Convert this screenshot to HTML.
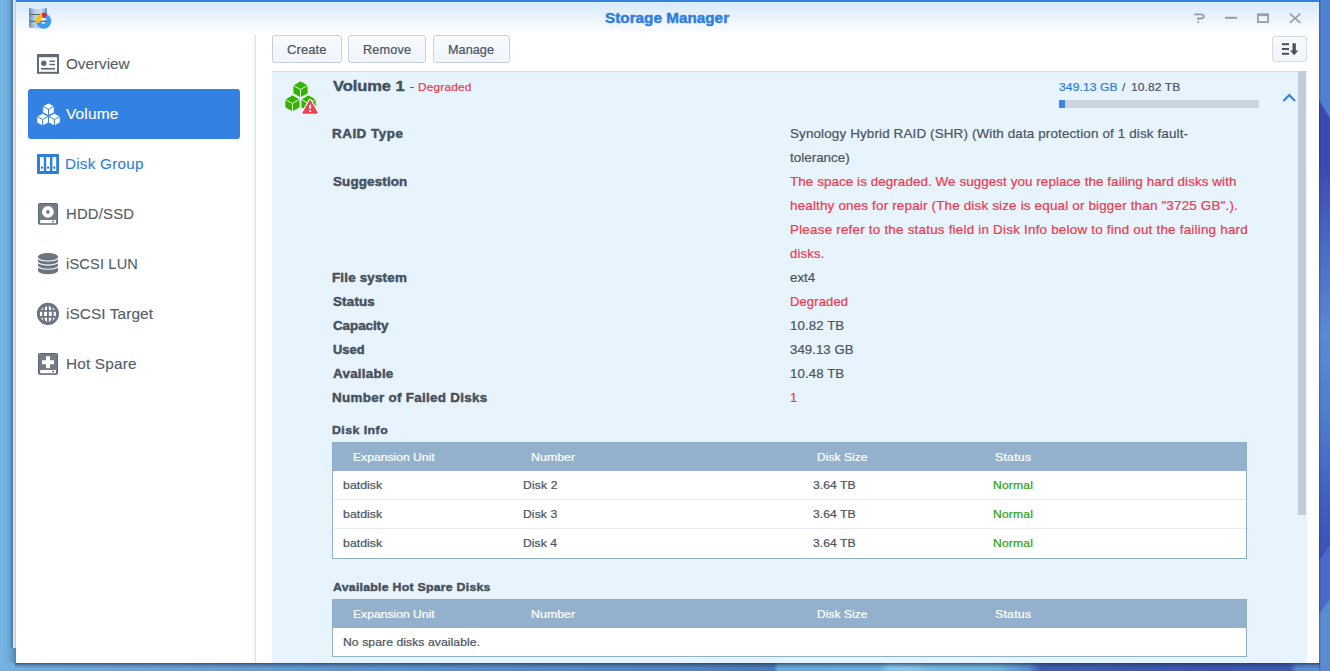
<!DOCTYPE html>
<html lang="en">
<head>
<meta charset="utf-8">
<title>Storage Manager</title>
<style>
html,body{margin:0;padding:0;}
body{width:1330px;height:671px;overflow:hidden;position:relative;font-family:"Liberation Sans",sans-serif;background:#5b95cb;}
.abs{position:absolute;}
#desk-left{left:0;top:0;width:16px;height:671px;background:linear-gradient(90deg,#77b5e3 0px,#75b2e0 6px,#6aa5d3 9px,#5a90be 11px,#4a7aa7 12.8px,#e8e6e6 13px,#e2e0e0 14.4px,#cecece 15px,#c9c9c9 16px);}
#desk-left2{left:0;top:648px;width:16px;height:23px;background:linear-gradient(90deg,#77b5e3 0px,#75b2e0 5px,#6ca8d6 9px,#5f97c6 13px,#4f82b0 16px);}
#desk-bottom{left:0;top:663px;width:1330px;height:8px;background:linear-gradient(90deg,#76b4e2 0px,#72aedd 16px,#72a9dc 60px,#6ba0d4 200px,#6095ca 333px,#5b8dc4 480px,#5585bc 660px,#4e79b6 774px,#6bacd6 778px,#6daed8 880px,#8bc4e6 890px,#89c2e4 918px,#79b8dc 924px,#73b0d8 1000px,#5b88ca 1030px,#3f5eb0 1040px,#3d55ac 1200px,#3e57ae 1290px,#5a88cc 1297px,#5b8cd2 1330px);}
#desk-bottom-shadow{left:15px;top:663px;width:1305px;height:5px;background:linear-gradient(180deg,rgba(25,55,100,.72) 0px,rgba(25,55,100,.35) 2px,rgba(25,55,100,0) 5px);}
#win{left:16px;top:0;width:1303px;height:663px;background:#fff;overflow:hidden;}
#topbar{left:0;top:0;width:1303px;height:2px;background:#2f81e3;}
#titlebar{left:0;top:2px;width:1303px;height:33px;background:linear-gradient(180deg,#e2effc 0px,#d9ebfb 1.5px,#e3f0fc 10px,#f0f7fd 20px,#fafcff 28px,#ffffff 33px);}
#sideline{left:236px;top:35px;width:4px;height:628px;background:linear-gradient(90deg,#ffffff 0px,#f8f9f9 1.5px,#eff0f0 3px,#e1e3e3 3px,#e1e3e3 4px);}
#sel{left:12px;top:89px;width:212px;height:50px;border-radius:3px;background:#3382e3;}
.btn{box-sizing:border-box;height:28px;top:35px;border:1px solid #c4d0dd;border-radius:3px;background:linear-gradient(180deg,#f7fafd,#f1f5fa);}
#panel{left:256px;top:71px;width:1035px;height:592px;background:#e8f4fd;border-top:1px solid #d5e0ec;box-sizing:border-box;}
#scroll{left:1282px;top:71px;width:8px;height:444px;background:#c1cdd8;}
#track{left:1043px;top:100px;width:200px;height:8px;background:#cdd5df;}
#fill{left:1043px;top:100px;width:6px;height:8px;background:linear-gradient(90deg,#2e8af6,#4f80df);}
.tbl{left:316px;width:915px;box-sizing:border-box;border:1px solid #8eafcc;background:#fff;}
.th{left:0;top:0;width:913px;height:28px;background:#93b1cd;}
.sep{left:0;width:913px;height:1px;background:#e6edf4;}
.t{position:absolute;transform-origin:0 0;white-space:pre;line-height:20px;height:20px;}
svg{position:absolute;overflow:visible;}

</style>
</head>
<body>
<div id="desk-left" class="abs"></div>
<div id="desk-left2" class="abs"></div>
<div id="desk-bottom" class="abs"></div>
<svg id="desk-right" class="abs" width="11" height="671" viewBox="0 0 11 671" style="left:1319px;top:0">
  <defs>
    <linearGradient id="rg" x1="0" x2="0" y1="0" y2="671" gradientUnits="userSpaceOnUse">
      <stop offset="0" stop-color="#3c48b0"/><stop offset=".25" stop-color="#3c4ab2"/><stop offset=".372" stop-color="#4a6cc4"/><stop offset=".50" stop-color="#5a8ad4"/><stop offset=".626" stop-color="#4f7ccc"/><stop offset=".75" stop-color="#3f5ec0"/><stop offset=".82" stop-color="#3c52b8"/><stop offset="1" stop-color="#3c52b8"/>
    </linearGradient>
    <linearGradient id="rs" x1="0" x2="11" y1="0" y2="0" gradientUnits="userSpaceOnUse">
      <stop offset="0" stop-color="#141e5a" stop-opacity=".32"/><stop offset=".2" stop-color="#141e5a" stop-opacity="0"/>
    </linearGradient>
  </defs>
  <rect x="0" y="0" width="11" height="671" fill="url(#rg)"/>
  <path d="M0 0 L11 0 L11 118 L0 100 Z" fill="#4f80d1"/>
  <path d="M0 560 L11 545 L11 671 L0 671 Z" fill="#4a69c8"/>
  <path d="M0 614 L11 599 L11 671 L0 671 Z" fill="#5b8bd1"/>
  <rect x="0" y="0" width="11" height="671" fill="url(#rs)"/>
</svg>
<div id="desk-bottom-shadow" class="abs"></div>
<div id="win" class="abs">
  <div id="topbar" class="abs"></div>
  <div id="titlebar" class="abs"></div>
  <div id="sideline" class="abs"></div>
  <div id="sel" class="abs"></div>
  <div class="btn abs" style="left:256px;width:70px"></div>
  <div class="btn abs" style="left:332px;width:78px"></div>
  <div class="btn abs" style="left:417px;width:77px"></div>
  <div class="btn abs" style="left:1256px;width:35px;top:36px;height:26px;border-color:#d3dbe5"></div>
  <div id="panel" class="abs"></div>
  <div id="scroll" class="abs"></div>
  <div id="track" class="abs"></div>
  <div id="fill" class="abs"></div>
  <div class="tbl abs" style="top:442px;height:117px">
    <div class="th abs"></div>
    <div class="sep abs" style="top:56px"></div>
    <div class="sep abs" style="top:85px"></div>
  </div>
  <div class="tbl abs" style="top:599px;height:58px">
    <div class="th abs"></div>
  </div>
  <!--ICONS-->
</div>
<div id="icons" class="abs" style="left:0;top:0;width:1330px;height:671px">
<!-- app icon -->
<svg style="left:28px;top:6px" width="26" height="26" viewBox="28 6 26 26">
  <defs>
    <linearGradient id="cyl" x1="0" x2="1" y1="0" y2="0">
      <stop offset="0" stop-color="#4f78ab"/><stop offset=".12" stop-color="#8fb0d0"/><stop offset=".35" stop-color="#bcd3e6"/><stop offset=".7" stop-color="#c6daea"/><stop offset=".9" stop-color="#8eafd0"/><stop offset="1" stop-color="#4a72a6"/>
    </linearGradient>
  </defs>
  <path d="M29.2 8 Q38 10 46.8 8 L46.8 27.6 Q38 29.4 29.2 27.6 Z" fill="url(#cyl)"/>
  <rect x="29.6" y="14" width="16.8" height="1" fill="#5b6068"/>
  <rect x="29.6" y="20.8" width="16.8" height="1" fill="#5b6068"/>
  <circle cx="43.7" cy="21.1" r="5.2" fill="none" stroke="#3b9bf6" stroke-width="4.8"/>
  <path d="M43.7 21.1 L36.1 23.2 A7.9 7.9 0 0 1 41.9 13.4 Z" fill="#fbbf0c"/>
  <path d="M43.7 21.1 L41.7 13.1 A8.2 8.2 0 0 1 46.9 13.5 Z" fill="#ee1c2e"/>
  <circle cx="43.6" cy="20.6" r="2.9" fill="#d6e9f9"/>
  <path d="M40.4 20.8 L45.4 20.8 L45.4 19.9 L47 21.3 L45.4 22.7 L45.4 21.8 L40.4 21.8 Z" fill="#3d4450"/>
</svg>
<!-- overview -->
<svg style="left:36px;top:53px" width="24" height="22" viewBox="36 53 24 22">
  <rect x="38" y="55" width="20" height="17.8" fill="#fff" stroke="#5f6873" stroke-width="2"/>
  <rect x="37" y="54" width="22" height="3.2" fill="#5f6873"/>
  <circle cx="43.8" cy="63.3" r="2.7" fill="#5f6873"/>
  <rect x="49.4" y="60.5" width="5.6" height="1.4" fill="#5f6873"/>
  <rect x="49.4" y="63.8" width="5.6" height="1.4" fill="#5f6873"/>
  <rect x="41" y="68" width="14" height="1.6" fill="#5f6873"/>
</svg>
<!-- volume (white cubes) -->
<svg style="left:35px;top:101px" width="27" height="27" viewBox="35 101 27 27">
  <g fill="#fff" stroke="#3382e3" stroke-width="1" stroke-linejoin="round">
    <path id="cw" d="M48.5 103 L54.3 106.1 L54.3 112.6 L48.5 115.8 L42.7 112.6 L42.7 106.1 Z"/>
    <path d="M42.6 113.2 L48.4 116.3 L48.4 122.8 L42.6 126 L36.8 122.8 L36.8 116.3 Z"/>
    <path d="M54.4 113.2 L60.2 116.3 L60.2 122.8 L54.4 126 L48.6 122.8 L48.6 116.3 Z"/>
  </g>
  <g fill="none" stroke="#3382e3" stroke-width="1">
    <path d="M42.7 106.1 L48.5 109.3 L54.3 106.1 M48.5 109.3 L48.5 115.8"/>
    <path d="M36.8 116.3 L42.6 119.5 L48.4 116.3 M42.6 119.5 L42.6 126"/>
    <path d="M48.6 116.3 L54.4 119.5 L60.2 116.3 M54.4 119.5 L54.4 126"/>
  </g>
</svg>
<!-- disk group -->
<svg style="left:36px;top:153px" width="24" height="22" viewBox="36 153 24 22">
  <rect x="37" y="154" width="22" height="20" rx="1" fill="#2f7de1"/>
  <rect x="40" y="157" width="3.8" height="14" fill="#fff"/>
  <rect x="46.2" y="157" width="3.8" height="14" fill="#fff"/>
  <rect x="52.4" y="157" width="3.8" height="14" fill="#fff"/>
  <rect x="40.95" y="166.6" width="1.9" height="2" fill="#1c5cc4"/>
  <rect x="47.15" y="166.6" width="1.9" height="2" fill="#1c5cc4"/>
  <rect x="53.35" y="166.6" width="1.9" height="2" fill="#1c5cc4"/>
</svg>
<!-- hdd -->
<svg style="left:36px;top:202px" width="24" height="24" viewBox="36 202 24 24">
  <rect x="38.5" y="203.5" width="19" height="20.7" rx="1" fill="#727b87" stroke="#606873" stroke-width="1"/>
  <circle cx="47.9" cy="211.9" r="5.9" fill="#fff"/>
  <circle cx="47.9" cy="211.9" r="1.8" fill="#6b7480"/>
  <rect x="40.2" y="220" width="15.8" height="3.2" fill="#fff"/>
  <rect x="52" y="221" width="2.2" height="1.2" rx=".6" fill="#555d68"/>
</svg>
<!-- iscsi lun -->
<svg style="left:36px;top:252px" width="24" height="24" viewBox="36 252 24 24">
  <path d="M38 256.6 A10 3.6 0 0 1 58 256.6 L58 270.7 A10 3.5 0 0 1 38 270.7 Z" fill="#6b7480"/>
  <g fill="none" stroke="#fff" stroke-width="1.1">
    <path d="M37.6 257.5 A10.4 3.5 0 0 0 58.4 257.5"/>
    <path d="M37.6 261.6 A10.4 3.5 0 0 0 58.4 261.6"/>
    <path d="M37.6 265.75 A10.4 3.5 0 0 0 58.4 265.75"/>
  </g>
</svg>
<!-- iscsi target globe -->
<svg style="left:36px;top:302px" width="24" height="24" viewBox="36 302 24 24">
  <defs><clipPath id="gclip"><circle cx="47.95" cy="313.9" r="10.5"/></clipPath></defs>
  <circle cx="47.95" cy="313.9" r="9.6" fill="#fff" stroke="#6b7480" stroke-width="2.9"/>
  <g fill="none" stroke="#6b7480" stroke-width="1.85" clip-path="url(#gclip)">
    <ellipse cx="47.95" cy="313.9" rx="4.9" ry="10"/>
    <path d="M47.95 304 L47.95 324 M37 310.9 L59 310.9 M37 316.9 L59 316.9"/>
  </g>
</svg>
<!-- hot spare -->
<svg style="left:36px;top:352px" width="24" height="24" viewBox="36 352 24 24">
  <rect x="38.5" y="353.5" width="19" height="20.8" rx="1" fill="#727b87" stroke="#606873" stroke-width="1"/>
  <rect x="42" y="360.2" width="12" height="4" fill="#fff"/>
  <rect x="46" y="356.2" width="4" height="12" fill="#fff"/>
  <rect x="40.2" y="370" width="15.8" height="3.2" fill="#fff"/>
  <rect x="52" y="371" width="2.2" height="1.2" rx=".6" fill="#555d68"/>
</svg>
<!-- green cubes + warning -->
<svg style="left:283px;top:79px" width="38" height="38" viewBox="283 79 38 38">
  <g fill="#30b400" stroke="#eefbe8" stroke-width=".9" stroke-linejoin="round">
    <path d="M300.50 80.90 L308.05 85.20 L308.05 93.50 L300.50 97.80 L292.95 93.50 L292.95 85.20 Z"/>
    <path d="M292.45 94.90 L300.00 99.20 L300.00 107.50 L292.45 111.80 L284.90 107.50 L284.90 99.20 Z"/>
    <path d="M308.55 94.90 L316.10 99.20 L316.10 107.50 L308.55 111.80 L301.00 107.50 L301.00 99.20 Z"/>
  </g>
  <g fill="none" stroke="#f2fcee" stroke-width=".95">
    <path d="M292.95 85.20 L300.50 89.50 L308.05 85.20 M300.50 89.50 L300.50 97.80"/>
    <path d="M284.90 99.20 L292.45 103.50 L300.00 99.20 M292.45 103.50 L292.45 111.80"/>
    <path d="M301.00 99.20 L308.55 103.50 L316.10 99.20 M308.55 103.50 L308.55 111.80"/>
  </g>
  <path d="M310.1 100.9 L317 112.9 L303.2 112.9 Z" fill="#ee4051" stroke="#ffffff" stroke-width="3.9" stroke-linejoin="round"/>
  <path d="M310.1 100.9 L317 112.9 L303.2 112.9 Z" fill="#ee4051" stroke="#ee4051" stroke-width="1.6" stroke-linejoin="round"/>
  <rect x="309.1" y="104.8" width="2" height="3.9" fill="#fff"/>
  <rect x="309.1" y="110.3" width="2" height="1.7" fill="#fff"/>
</svg>
<!-- window controls -->
<svg style="left:1190px;top:10px" width="116" height="16" viewBox="1190 10 116 16">
  <g fill="none" stroke="#979fa9" stroke-width="1.9">
    <path d="M1194.2 14.4 L1200.6 14.4 Q1203.8 14.4 1203.8 16.4 Q1203.8 18.5 1200.6 18.5 L1198.2 18.5 L1198.2 20"/>
    <path d="M1198.2 21.3 L1198.2 22.8"/>
    <path d="M1225 17.8 L1236.9 17.8" stroke-width="2"/>
    <rect x="1257.9" y="15" width="10.2" height="7.1" stroke-width="1.8"/>
    <path d="M1257 14.7 L1269 14.7" stroke-width="2.8"/>
    <path d="M1289.8 13.6 L1300.4 22.9 M1300.4 13.6 L1289.8 22.9" stroke-width="1.8"/>
  </g>
</svg>
<!-- sort button icon -->
<svg style="left:1280px;top:42px" width="20" height="15" viewBox="1280 42 20 15">
  <g fill="#48525d">
    <rect x="1281.9" y="43.2" width="7.1" height="2"/>
    <rect x="1281.9" y="48" width="7.1" height="2"/>
    <rect x="1281.9" y="52.8" width="7.1" height="2"/>
    <path d="M1292.5 43.2 L1295.8 43.2 L1295.8 50.4 L1298.3 50.4 L1294.15 55.2 L1290 50.4 L1292.5 50.4 Z"/>
  </g>
</svg>
<!-- chevron -->
<svg style="left:1281px;top:92px" width="16" height="12" viewBox="1281 92 16 12">
  <path d="M1283.4 100.9 L1289.2 95.1 L1295 100.9" fill="none" stroke="#3383e6" stroke-width="2.1"/>
</svg>
</div>


<div id="texts">
<span class="t" id="t0" style="left:605.22px;top:8px;font-size:14.2px;font-weight:700;color:#2f7de1;letter-spacing:0.044px;-webkit-text-stroke:0.45px #2f7de1;transform:scaleX(1.0719)">Storage Manager</span>
<span class="t" id="t1" style="left:66.05px;top:54.0031px;font-size:14.3px;font-weight:400;color:#535d68;letter-spacing:0.021px;-webkit-text-stroke:0.12px #535d68;transform:scaleX(1.0636)">Overview</span>
<span class="t" id="t2" style="left:66.22px;top:104.003px;font-size:14.3px;font-weight:400;color:#ffffff;letter-spacing:0.145px;-webkit-text-stroke:0.12px #ffffff;transform:scaleX(1.0787)">Volume</span>
<span class="t" id="t3" style="left:65.03px;top:154.003px;font-size:14.3px;font-weight:400;color:#2f7de1;letter-spacing:0.209px;-webkit-text-stroke:0.12px #2f7de1;transform:scaleX(1.0685)">Disk Group</span>
<span class="t" id="t4" style="left:66.13px;top:204.003px;font-size:14.3px;font-weight:400;color:#535d68;letter-spacing:0.211px;-webkit-text-stroke:0.12px #535d68;transform:scaleX(1.0361)">HDD/SSD</span>
<span class="t" id="t5" style="left:66.46px;top:254.003px;font-size:14.3px;font-weight:400;color:#535d68;letter-spacing:0.194px;-webkit-text-stroke:0.12px #535d68;transform:scaleX(1.0162)">iSCSI LUN</span>
<span class="t" id="t6" style="left:66.25px;top:304.003px;font-size:14.3px;font-weight:400;color:#535d68;letter-spacing:0.058px;-webkit-text-stroke:0.12px #535d68;transform:scaleX(1.0783)">iSCSI Target</span>
<span class="t" id="t7" style="left:66.03px;top:354.003px;font-size:14.3px;font-weight:400;color:#535d68;letter-spacing:0.153px;-webkit-text-stroke:0.12px #535d68;transform:scaleX(1.0742)">Hot Spare</span>
<span class="t" id="t8" style="left:287.21px;top:40.0063px;font-size:12.2px;font-weight:400;color:#4b5563;letter-spacing:0.089px;-webkit-text-stroke:0.22px #4b5563;transform:scaleX(1.0659)">Create</span>
<span class="t" id="t9" style="left:363.04px;top:40.0063px;font-size:12.2px;font-weight:400;color:#4b5563;letter-spacing:0.152px;-webkit-text-stroke:0.22px #4b5563;transform:scaleX(1.039)">Remove</span>
<span class="t" id="t10" style="left:448.20px;top:40.0063px;font-size:12.2px;font-weight:400;color:#4b5563;letter-spacing:0.044px;-webkit-text-stroke:0.22px #4b5563;transform:scaleX(1.0391)">Manage</span>
<span class="t" id="t11" style="left:332.66px;top:76.0125px;font-size:15.3px;font-weight:700;color:#46505c;letter-spacing:-0.056px;-webkit-text-stroke:0.45px #46505c;transform:scaleX(1.0772)">Volume 1</span>
<span class="t" id="t12" style="left:410.40px;top:76px;font-size:11.2px;font-weight:400;color:#4b5563;letter-spacing:0.000px;-webkit-text-stroke:0.22px #4b5563;transform:scaleX(1.0547)">-</span>
<span class="t" id="t13" style="left:418.43px;top:77px;font-size:11.2px;font-weight:400;color:#ef3a4d;letter-spacing:0.179px;-webkit-text-stroke:0.22px #ef3a4d;transform:scaleX(1.0569)">Degraded</span>
<span class="t" id="t14" style="left:1058.58px;top:77.0125px;font-size:11.2px;font-weight:400;color:#2f7de1;letter-spacing:0.116px;-webkit-text-stroke:0.22px #2f7de1;transform:scaleX(1.0768)">349.13 GB</span>
<span class="t" id="t15" style="left:1121.80px;top:77.0125px;font-size:11.2px;font-weight:400;color:#4b5563;letter-spacing:0.000px;-webkit-text-stroke:0.22px #4b5563;transform:scaleX(1.0547)">/</span>
<span class="t" id="t16" style="left:1131.16px;top:77.0125px;font-size:11.2px;font-weight:400;color:#4b5563;letter-spacing:0.087px;-webkit-text-stroke:0.22px #4b5563;transform:scaleX(1.0742)">10.82 TB</span>
<span class="t" id="t17" style="left:332.25px;top:124px;font-size:12.2px;font-weight:700;color:#47515d;letter-spacing:0.461px;-webkit-text-stroke:0.45px #47515d;transform:scaleX(1.1)">RAID Type</span>
<span class="t" id="t18" style="left:332.70px;top:172px;font-size:12.2px;font-weight:700;color:#47515d;letter-spacing:0.129px;-webkit-text-stroke:0.45px #47515d;transform:scaleX(1.1)">Suggestion</span>
<span class="t" id="t19" style="left:332.49px;top:268px;font-size:12.2px;font-weight:700;color:#47515d;letter-spacing:0.161px;-webkit-text-stroke:0.45px #47515d;transform:scaleX(1.1)">File system</span>
<span class="t" id="t20" style="left:332.70px;top:292px;font-size:12.2px;font-weight:700;color:#47515d;letter-spacing:0.156px;-webkit-text-stroke:0.45px #47515d;transform:scaleX(1.1)">Status</span>
<span class="t" id="t21" style="left:333.05px;top:316px;font-size:12.2px;font-weight:700;color:#47515d;letter-spacing:-0.053px;-webkit-text-stroke:0.45px #47515d;transform:scaleX(1.1)">Capacity</span>
<span class="t" id="t22" style="left:332.60px;top:340px;font-size:12.2px;font-weight:700;color:#47515d;letter-spacing:0.050px;-webkit-text-stroke:0.45px #47515d;transform:scaleX(1.0547)">Used</span>
<span class="t" id="t23" style="left:333.15px;top:364px;font-size:12.2px;font-weight:700;color:#47515d;letter-spacing:0.221px;-webkit-text-stroke:0.45px #47515d;transform:scaleX(1.1)">Available</span>
<span class="t" id="t24" style="left:332.18px;top:388px;font-size:12.2px;font-weight:700;color:#47515d;letter-spacing:0.266px;-webkit-text-stroke:0.45px #47515d;transform:scaleX(1.1)">Number of Failed Disks</span>
<span class="t" id="t25" style="left:790.00px;top:124px;font-size:12.2px;font-weight:400;color:#4b5563;letter-spacing:0.129px;-webkit-text-stroke:0.22px #4b5563;transform:scaleX(1.1)">Synology Hybrid RAID (SHR) (With data protection of 1 disk fault-</span>
<span class="t" id="t26" style="left:790.00px;top:148px;font-size:12.2px;font-weight:400;color:#4b5563;letter-spacing:0.030px;-webkit-text-stroke:0.22px #4b5563;transform:scaleX(1.0959)">tolerance)</span>
<span class="t" id="t27" style="left:790.48px;top:172px;font-size:12.2px;font-weight:400;color:#ef3a4d;letter-spacing:0.069px;-webkit-text-stroke:0.22px #ef3a4d;transform:scaleX(1.1)">The space is degraded. We suggest you replace the failing hard disks with</span>
<span class="t" id="t28" style="left:789.70px;top:196px;font-size:12.2px;font-weight:400;color:#ef3a4d;letter-spacing:0.166px;-webkit-text-stroke:0.22px #ef3a4d;transform:scaleX(1.1)">healthy ones for repair (The disk size is equal or bigger than "3725 GB".).</span>
<span class="t" id="t29" style="left:789.57px;top:220px;font-size:12.2px;font-weight:400;color:#ef3a4d;letter-spacing:0.199px;-webkit-text-stroke:0.22px #ef3a4d;transform:scaleX(1.1)">Please refer to the status field in Disk Info below to find out the failing hard</span>
<span class="t" id="t30" style="left:789.83px;top:244px;font-size:12.2px;font-weight:400;color:#ef3a4d;letter-spacing:0.233px;-webkit-text-stroke:0.22px #ef3a4d;transform:scaleX(1.0635)">disks.</span>
<span class="t" id="t31" style="left:789.93px;top:268px;font-size:12.2px;font-weight:400;color:#4b5563;letter-spacing:-0.004px;-webkit-text-stroke:0.22px #4b5563;transform:scaleX(1.0923)">ext4</span>
<span class="t" id="t32" style="left:789.59px;top:292px;font-size:12.2px;font-weight:400;color:#ef3a4d;letter-spacing:0.167px;-webkit-text-stroke:0.22px #ef3a4d;transform:scaleX(1.0595)">Degraded</span>
<span class="t" id="t33" style="left:789.56px;top:316px;font-size:12.2px;font-weight:400;color:#4b5563;letter-spacing:0.101px;-webkit-text-stroke:0.22px #4b5563;transform:scaleX(1.0849)">10.82 TB</span>
<span class="t" id="t34" style="left:789.85px;top:340px;font-size:12.2px;font-weight:400;color:#4b5563;letter-spacing:0.068px;-webkit-text-stroke:0.22px #4b5563;transform:scaleX(1.0807)">349.13 GB</span>
<span class="t" id="t35" style="left:789.56px;top:364px;font-size:12.2px;font-weight:400;color:#4b5563;letter-spacing:0.101px;-webkit-text-stroke:0.22px #4b5563;transform:scaleX(1.0849)">10.48 TB</span>
<span class="t" id="t36" style="left:790.33px;top:388px;font-size:12.2px;font-weight:400;color:#ef3a4d;letter-spacing:0.000px;-webkit-text-stroke:0.22px #ef3a4d;transform:scaleX(1.0547)">1</span>
<span class="t" id="t37" style="left:332.40px;top:420.012px;font-size:11.2px;font-weight:700;color:#47515d;letter-spacing:0.423px;-webkit-text-stroke:0.45px #47515d;transform:scaleX(1.1)">Disk Info</span>
<span class="t" id="t38" style="left:332.87px;top:577.013px;font-size:11.2px;font-weight:700;color:#47515d;letter-spacing:0.230px;-webkit-text-stroke:0.45px #47515d;transform:scaleX(1.1)">Available Hot Spare Disks</span>
<span class="t" id="t39" style="left:353.40px;top:447.012px;font-size:11.2px;font-weight:400;color:#ffffff;letter-spacing:0.029px;-webkit-text-stroke:0.22px #ffffff;transform:scaleX(1.079)">Expansion Unit</span>
<span class="t" id="t40" style="left:530.72px;top:447.012px;font-size:11.2px;font-weight:400;color:#ffffff;letter-spacing:0.066px;-webkit-text-stroke:0.22px #ffffff;transform:scaleX(1.1)">Number</span>
<span class="t" id="t41" style="left:816.54px;top:447.012px;font-size:11.2px;font-weight:400;color:#ffffff;letter-spacing:0.088px;-webkit-text-stroke:0.22px #ffffff;transform:scaleX(1.0649)">Disk Size</span>
<span class="t" id="t42" style="left:995.01px;top:447.012px;font-size:11.2px;font-weight:400;color:#ffffff;letter-spacing:0.215px;-webkit-text-stroke:0.22px #ffffff;transform:scaleX(1.1)">Status</span>
<span class="t" id="t43" style="left:353.40px;top:604.013px;font-size:11.2px;font-weight:400;color:#ffffff;letter-spacing:0.029px;-webkit-text-stroke:0.22px #ffffff;transform:scaleX(1.079)">Expansion Unit</span>
<span class="t" id="t44" style="left:530.72px;top:604.013px;font-size:11.2px;font-weight:400;color:#ffffff;letter-spacing:0.066px;-webkit-text-stroke:0.22px #ffffff;transform:scaleX(1.1)">Number</span>
<span class="t" id="t45" style="left:816.54px;top:604.013px;font-size:11.2px;font-weight:400;color:#ffffff;letter-spacing:0.088px;-webkit-text-stroke:0.22px #ffffff;transform:scaleX(1.0649)">Disk Size</span>
<span class="t" id="t46" style="left:995.01px;top:604.013px;font-size:11.2px;font-weight:400;color:#ffffff;letter-spacing:0.215px;-webkit-text-stroke:0.22px #ffffff;transform:scaleX(1.1)">Status</span>
<span class="t" id="t47" style="left:343.30px;top:475px;font-size:11.2px;font-weight:400;color:#4b5563;letter-spacing:0.031px;-webkit-text-stroke:0.22px #4b5563;transform:scaleX(1.1)">batdisk</span>
<span class="t" id="t48" style="left:523.45px;top:475px;font-size:11.2px;font-weight:400;color:#4b5563;letter-spacing:0.149px;-webkit-text-stroke:0.22px #4b5563;transform:scaleX(1.0816)">Disk 2</span>
<span class="t" id="t49" style="left:812.64px;top:475px;font-size:11.2px;font-weight:400;color:#4b5563;letter-spacing:0.067px;-webkit-text-stroke:0.22px #4b5563;transform:scaleX(1.0822)">3.64 TB</span>
<span class="t" id="t50" style="left:992.76px;top:475px;font-size:11.2px;font-weight:400;color:#2ba311;letter-spacing:0.155px;-webkit-text-stroke:0.22px #2ba311;transform:scaleX(1.0816)">Normal</span>
<span class="t" id="t51" style="left:343.30px;top:504px;font-size:11.2px;font-weight:400;color:#4b5563;letter-spacing:0.031px;-webkit-text-stroke:0.22px #4b5563;transform:scaleX(1.1)">batdisk</span>
<span class="t" id="t52" style="left:523.08px;top:504px;font-size:11.2px;font-weight:400;color:#4b5563;letter-spacing:0.108px;-webkit-text-stroke:0.22px #4b5563;transform:scaleX(1.0816)">Disk 3</span>
<span class="t" id="t53" style="left:812.64px;top:504px;font-size:11.2px;font-weight:400;color:#4b5563;letter-spacing:0.067px;-webkit-text-stroke:0.22px #4b5563;transform:scaleX(1.0822)">3.64 TB</span>
<span class="t" id="t54" style="left:992.76px;top:504px;font-size:11.2px;font-weight:400;color:#2ba311;letter-spacing:0.155px;-webkit-text-stroke:0.22px #2ba311;transform:scaleX(1.0816)">Normal</span>
<span class="t" id="t55" style="left:343.30px;top:533px;font-size:11.2px;font-weight:400;color:#4b5563;letter-spacing:0.031px;-webkit-text-stroke:0.22px #4b5563;transform:scaleX(1.1)">batdisk</span>
<span class="t" id="t56" style="left:523.08px;top:533px;font-size:11.2px;font-weight:400;color:#4b5563;letter-spacing:0.071px;-webkit-text-stroke:0.22px #4b5563;transform:scaleX(1.0816)">Disk 4</span>
<span class="t" id="t57" style="left:812.64px;top:533px;font-size:11.2px;font-weight:400;color:#4b5563;letter-spacing:0.067px;-webkit-text-stroke:0.22px #4b5563;transform:scaleX(1.0822)">3.64 TB</span>
<span class="t" id="t58" style="left:992.76px;top:533px;font-size:11.2px;font-weight:400;color:#2ba311;letter-spacing:0.155px;-webkit-text-stroke:0.22px #2ba311;transform:scaleX(1.0816)">Normal</span>
<span class="t" id="t59" style="left:343.16px;top:632.003px;font-size:11.2px;font-weight:400;color:#4b5563;letter-spacing:0.059px;-webkit-text-stroke:0.22px #4b5563;transform:scaleX(1.0896)">No spare disks available.</span>
</div>
</body>
</html>
